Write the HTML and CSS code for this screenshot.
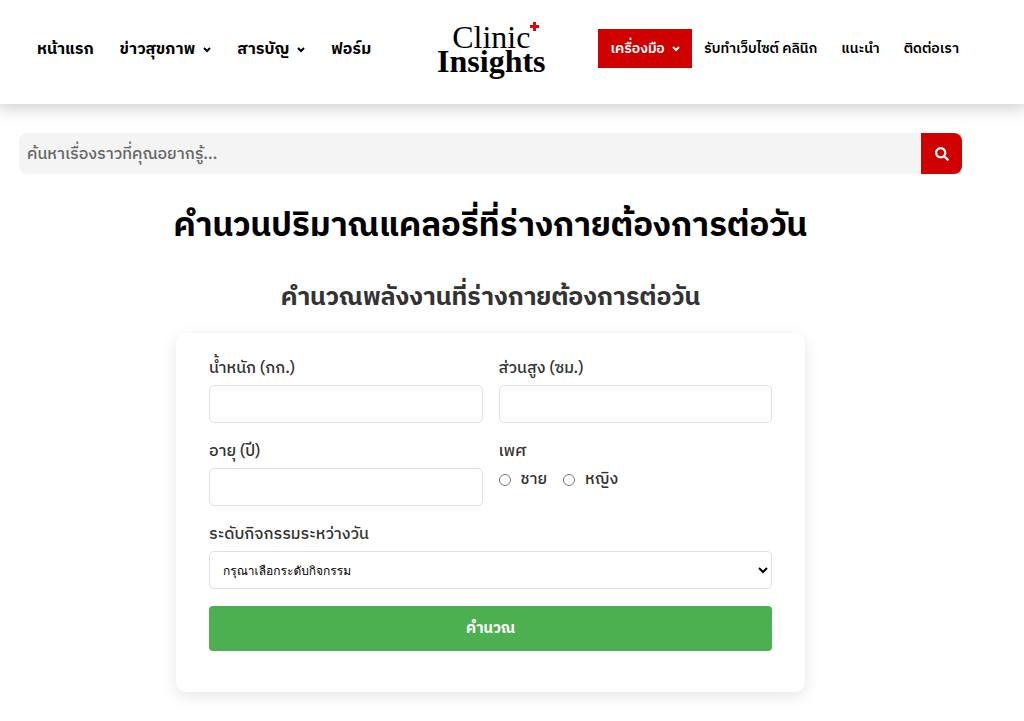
FILE: index.html
```html
<!DOCTYPE html>
<html lang="th">
<head>
<meta charset="UTF-8">
<meta name="viewport" content="width=device-width, initial-scale=1.0">
<title>คำนวนปริมาณแคลอรี่</title>
<link rel="stylesheet" href="styles.css">
</head>
<body>

<header class="site-header">
  <nav class="nav nav-left">
    <a href="#">หน้าแรก</a>
    <a href="#">ข่าวสุขภาพ <svg class="caret" viewBox="0 0 8 6"><path d="M1 1l3 3 3-3"/></svg></a>
    <a href="#">สารบัญ <svg class="caret" viewBox="0 0 8 6"><path d="M1 1l3 3 3-3"/></svg></a>
    <a href="#">ฟอร์ม</a>
  </nav>
  <a class="logo" href="#">
    <span class="logo-top">Clinic<svg class="logo-cross" viewBox="0 0 9 9"><path d="M3 0h3v3h3v3H6v3H3V6H0V3h3z"/></svg></span>
    <span class="logo-bottom">Insights</span>
  </a>
  <nav class="nav nav-right">
    <a class="active" href="#">เครื่องมือ <svg class="caret" viewBox="0 0 8 6"><path d="M1 1l3 3 3-3"/></svg></a>
    <a href="#">รับทำเว็บไซต์ คลินิก</a>
    <a href="#">แนะนำ</a>
    <a href="#">ติดต่อเรา</a>
  </nav>
</header>

<main class="page">
  <form class="search">
    <input type="search" placeholder="ค้นหาเรื่องราวที่คุณอยากรู้..." aria-label="ค้นหา">
    <button type="submit" aria-label="ค้นหา">
      <svg viewBox="0 0 512 512"><path d="M505 442.700L405.300 343c-4.500-4.500-10.600-7-17-7H372c27.600-35.300 44-79.700 44-128C416 93.100 322.900 0 208 0S0 93.100 0 208s93.100 208 208 208c48.300 0 92.700-16.400 128-44v16.300c0 6.400 2.500 12.500 7 17l99.700 99.700c9.400 9.400 24.600 9.400 33.900 0l28.300-28.300c9.400-9.400 9.400-24.600.1-34zM208 336c-70.700 0-128-57.200-128-128 0-70.700 57.200-128 128-128 70.700 0 128 57.200 128 128 0 70.700-57.200 128-128 128z"/></svg>
    </button>
  </form>

  <h1>คำนวนปริมาณแคลอรี่ที่ร่างกายต้องการต่อวัน</h1>
  <h2>คำนวณพลังงานที่ร่างกายต้องการต่อวัน</h2>

  <form class="calc">
    <div class="row">
      <div class="field">
        <label for="weight">น้ำหนัก (กก.)</label>
        <input type="text" id="weight">
      </div>
      <div class="field">
        <label for="height">ส่วนสูง (ซม.)</label>
        <input type="text" id="height">
      </div>
    </div>
    <div class="row">
      <div class="field">
        <label for="age">อายุ (ปี)</label>
        <input type="text" id="age">
      </div>
      <fieldset class="field">
        <legend>เพศ</legend>
        <div class="radios">
          <label><input type="radio" name="gender" value="male">ชาย</label>
          <label><input type="radio" name="gender" value="female">หญิง</label>
        </div>
      </fieldset>
    </div>
    <div class="field">
      <label for="activity">ระดับกิจกรรมระหว่างวัน</label>
      <select id="activity">
        <option>กรุณาเลือกระดับกิจกรรม</option>
      </select>
    </div>
    <button class="submit" type="button">คำนวณ</button>
  </form>
</main>

</body>
</html>
```
FILE: styles.css
```css
* {
  box-sizing: border-box;
}

body {
  margin: 0;
  background: #fff;
  color: #333;
  font-family: "IBM Plex Sans Thai", "Noto Sans Thai", "Noto Sans", sans-serif;
  font-size: 16px;
  font-weight: 500;
  line-height: 24px;
}

/* header */
.site-header {
  display: flex;
  justify-content: space-between;
  align-items: center;
  height: 104px;
  padding: 0 53px 7px 24px;
  box-shadow: 0 3px 14px 2px rgba(0,0,0,0.18);
}

.nav {
  display: flex;
  align-items: center;
}
.nav a {
  padding: 8px 12px;
  color: #000;
  font-size: 14px;
  font-weight: 600;
  line-height: 23px;
  text-decoration: none;
  white-space: nowrap;
}
.nav-left a {
  padding: 9px 13px 7px;
  font-size: 16px;
  font-weight: 700;
}
.nav .active {
  background: #d00000;
  color: #fff;
}
.caret {
  width: 8px;
  height: 6px;
  margin-left: 4px;
  fill: none;
  stroke: currentColor;
  stroke-width: 2;
  vertical-align: 1px;
}

.logo {
  display: flex;
  flex-direction: column;
  align-items: center;
  color: #000;
  font-family: "Liberation Serif", serif;
  font-size: 32px;
  font-weight: 400;
  line-height: 24px;
  text-decoration: none;
}
.logo-top {
  position: relative;
}
.logo-bottom {
  font-weight: bold;
}
/* red cross over the last letter */
.logo-cross {
  position: absolute;
  top: -3px;
  left: 100%;
  width: 9px;
  height: 9px;
  fill: #e60012;
}

/* search */
.page {
  padding: 29px 62px 28px 19px;
}
.search {
  display: flex;
  height: 41px;
  border-radius: 8px;
  overflow: hidden;
}
.search input {
  flex: 1;
  padding: 2px 8px 0;
  border: 0;
  background: #f4f4f4;
  font: inherit;
}
.search input::placeholder {
  color: #666;
}
.search button {
  width: 41px;
  padding: 0;
  border: 0;
  background: #d00000;
}
.search svg {
  width: 14px;
  height: 14px;
  fill: #fff;
  vertical-align: middle;
}

h1,
h2 {
  margin: 0;
  text-align: center;
}
h1 {
  margin-top: 29px;
  color: #000;
  font-size: 33px;
  line-height: 48px;
}
h2 {
  margin-top: 29px;
  font-size: 25px;
  line-height: 36px;
}

/* calculator */
.calc {
  max-width: 629px;
  margin: 17px auto 0;
  padding: 24px 33px 41px;
  border-radius: 10px;
  box-shadow: 0 4px 16px rgba(0,0,0,0.1);
}
.row {
  display: grid;
  grid-template-columns: 1fr 1fr;
  gap: 16px;
}
.field {
  min-width: 0;
  margin: 0 0 17px;
  padding: 0;
  border: 0;
}
.field > label,
legend {
  display: block;
  margin-bottom: 4px;
  padding: 0;
}
.field > input,
select {
  display: block;
  width: 100%;
  height: 38px;
  padding: 0 9px;
  border: 1px solid #e0e0e0;
  border-radius: 5px;
  background: #fff;
  color: #000;
  font-family: Loma, "Noto Sans Thai Looped", "DejaVu Sans", sans-serif;
  font-size: 12px;
}
.radios {
  display: flex;
  gap: 16px;
}
.radios label {
  display: flex;
  align-items: center;
  gap: 10px;
}
.radios input {
  width: 12px;
  height: 12px;
  margin: 0;
}
.submit {
  display: block;
  width: 100%;
  height: 45px;
  border: 0;
  border-radius: 4px;
  background: #4caf50;
  color: #fff;
  font: inherit;
  font-size: 15px;
  font-weight: 700;
}
```
